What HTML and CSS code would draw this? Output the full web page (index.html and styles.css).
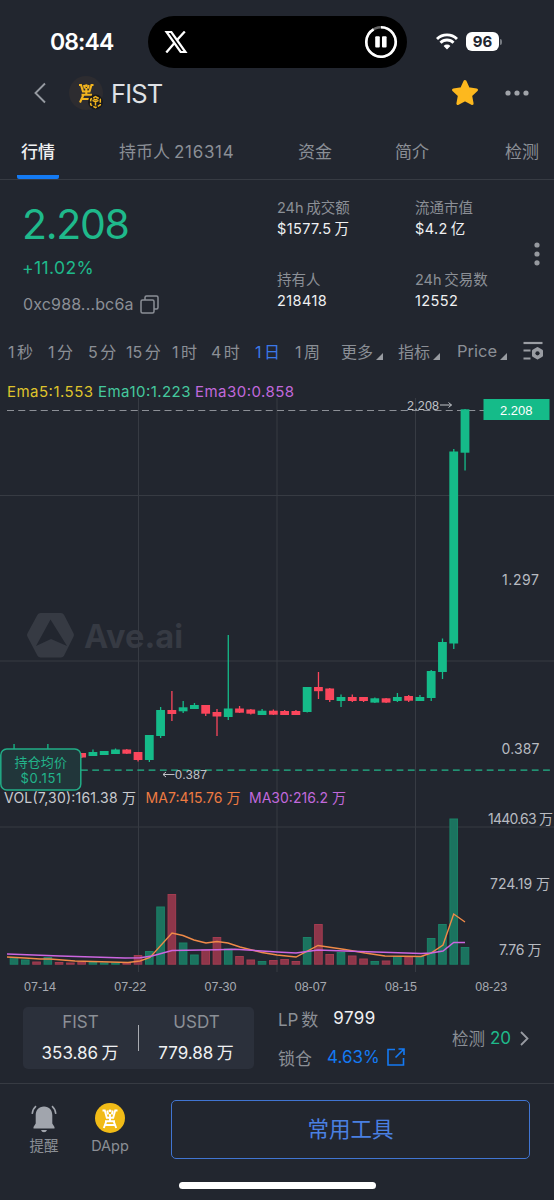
FILE: index.html
```html
<!DOCTYPE html>
<html lang="zh-CN">
<head>
  <meta charset="UTF-8" />
  <meta name="viewport" content="width=device-width, initial-scale=1.0"/>
  <title>FIST - Ave.ai</title>
  <link rel="stylesheet" href="styles.css">
</head>
<body>
  <div class="status-bar">
    <span class="clock">08:44</span>
    <div class="island">
      <svg width="24" height="22" viewBox="0 0 24 22">
        <path d="M2.500 1h4.800l14.200 20h-4.800z" fill="none" stroke="#fff" stroke-width="2.200"/>
        <path d="M20.800 .5l-8 8.800M10.200 12.300L2.300 21.500" stroke="#fff" stroke-width="2.300"/>
      </svg>
      <svg width="34" height="34" viewBox="0 0 34 34">
        <circle cx="17" cy="17" r="14.700" fill="none" stroke="#666" stroke-width="2.600"/>
        <path d="M17 2.300A14.700 14.700 0 1 1 9.600 4.300" fill="none" stroke="#fff" stroke-width="2.600"/>
        <rect x="11.200" y="11.200" width="4.600" height="11.200" rx="1" fill="#fff"/>
        <rect x="18" y="11.200" width="4.600" height="11.200" rx="1" fill="#fff"/>
      </svg>
    </div>
    <svg class="wifi" width="22" height="17" viewBox="0 0 22 17" fill="none" stroke="#fff" stroke-width="2.900">
      <path d="M1 6a14.300 14.300 0 0 1 20 0"/>
      <path d="M4.500 9.700a9.200 9.200 0 0 1 13 0"/>
      <path d="M7.600 13L11 16.600 14.400 13a4.800 4.800 0 0 0-6.800 0z" fill="#fff" stroke="none"/>
    </svg>
    <span class="battery">96</span>
    <span class="battery-cap"></span>
  </div>

  <header class="title-bar">
    <svg class="back" width="12" height="22" viewBox="0 0 12 22"><path d="M11 1.500L1.500 11 11 20.500" fill="none" stroke="#969aa1" stroke-width="1.900"/></svg>
    <svg class="coin" width="36" height="36" viewBox="0 0 36 36">
      <circle cx="17" cy="17" r="17" fill="#2d2c30"/>
      <g fill="none" stroke="#f3b51e" stroke-width="2.100">
        <path d="M10 9h2l2 6.500h6.500L22.500 9h2M15 9l.8 3.500M19.700 9l-.8 3.500M17.300 12v6M12.500 18.700h10.500M14.500 18.700L11 26.500M12.800 23h7"/>
      </g>
      <circle cx="17.300" cy="9.700" r="1.400" fill="#f3b51e"/>
      <circle cx="26.500" cy="26" r="7.500" fill="#17181c"/>
      <path d="M26.500 20.500l4.800 2.800v5.500l-4.800 2.800-4.800-2.800v-5.500z" fill="none" stroke="#f3b51e" stroke-width="1.500" stroke-dasharray="3.800 1.300"/>
      <path d="M23.500 24.300l3 1.700 3-1.700M26.500 26v3.500M24.500 22.800l2 1 2-1" fill="none" stroke="#f3b51e" stroke-width="1.500"/>
    </svg>
    <h1>FIST</h1>
    <svg class="star" width="28" height="28" viewBox="0 0 28 28"><path d="M14 2.500l3.400 7.300 8.100 1.100-5.900 5.500 1.500 8.100-7.100-3.900-7.100 3.900 1.500-8.100-5.900-5.500 8.100-1.100z" fill="#fdb81e" stroke="#fdb81e" stroke-width="3" stroke-linejoin="round"/></svg>
    <svg width="24" height="6" viewBox="0 0 24 6" fill="#a0a3a9"><circle cx="3" cy="3" r="2.600"/><circle cx="12" cy="3" r="2.600"/><circle cx="21" cy="3" r="2.600"/></svg>
  </header>

  <nav class="tabs">
    <a class="active">行情</a>
    <a class="holders">持币人<span>216314</span></a>
    <a>资金</a>
    <a>简介</a>
    <a>检测</a>
  </nav>

  <section class="quote">
    <div class="price-box">
      <div class="price">2.208</div>
      <div class="change">+11.02%</div>
      <div class="address">
        <span>0xc988...bc6a</span>
        <svg width="19" height="19" viewBox="0 0 19 19" fill="none" stroke="#8b8f96" stroke-width="1.500"><rect x="1" y="5" width="13" height="13" rx="1.500"/><path d="M5 5V2.500Q5 1 6.500 1h10Q18 1 18 2.500v10q0 1.500-1.500 1.500H14"/></svg>
      </div>
    </div>
    <dl class="stats">
      <div><dt>24h 成交额</dt><dd>$1577.5 万</dd></div>
      <div><dt>流通市值</dt><dd>$4.2 亿</dd></div>
      <div><dt>持有人</dt><dd>218418</dd></div>
      <div><dt>24h 交易数</dt><dd>12552</dd></div>
    </dl>
    <svg class="more" width="6" height="24" viewBox="0 0 6 24" fill="#96999f"><circle cx="3" cy="3" r="2.600"/><circle cx="3" cy="12" r="2.600"/><circle cx="3" cy="20.800" r="2.600"/></svg>
  </section>

  <div class="periods">
    <span>1 秒</span>
    <span>1 分</span>
    <span>5 分</span>
    <span>15 分</span>
    <span>1 时</span>
    <span>4 时</span>
    <span class="on">1 日</span>
    <span>1 周</span>
    <span class="menu">更多</span>
    <span class="menu">指标</span>
    <span class="menu latin">Price</span>
    <svg width="21" height="20" viewBox="0 0 21 20" fill="none" stroke="#9a9da3">
      <path d="M.5 2h19" stroke-width="2.200"/><path d="M.5 9.500h7M.5 17.500h7" stroke-width="1.900"/>
      <path d="M14.500 7.300l4.300 2.500v5l-4.300 2.500-4.300-2.500v-5z" fill="#9a9da3" stroke-width="2.400" stroke-linejoin="round"/>
      <circle cx="14.500" cy="12.300" r="2.100" fill="#22262f" stroke="none"/>
    </svg>
  </div>

  <svg class="chart" id="chart" width="554" height="630" viewBox="0 370 554 630">
    <g stroke="#373b43" stroke-width="1">
      <path d="M138.500 398V972M277 398V972M415.500 398V972"/>
      <path d="M0 495.500H554M0 661H554M0 827H554"/>
    </g>
    <g class="watermark">
      <path fill-rule="evenodd" d="M40.500 613h20.500q2 0 3 1.700l9.500 18.600q1 1.700 0 3.400l-9.500 19q-1 1.800-3 1.800H40.500q-2 0-3-1.800l-10-19q-1-1.700 0-3.400l10-18.600q1-1.700 3-1.700zM50.500 619.500L36 646 51 639 67 646z"/>
      <text x="84" y="648" textLength="99" lengthAdjust="spacingAndGlyphs">Ave.ai</text>
    </g>
    <g class="ema">
      <text x="7" y="397" fill="#dfc32c" textLength="86">Ema5:1.553</text>
      <text x="98" y="397" fill="#45c99e" textLength="92.500">Ema10:1.223</text>
      <text x="195" y="397" fill="#c169dc" textLength="99">Ema30:0.858</text>
    </g>
    <path d="M7 410.500H484" stroke="#8d9097" stroke-width="1.200" stroke-dasharray="7 4.250"/>
    <g id="candles"></g>
    <path d="M81 770.200H551" stroke="#22b78b" stroke-width="1.300" stroke-dasharray="6.800 4.470"/>
    <text class="mark" x="407" y="409.500" textLength="32">2.208</text>
    <path class="arrow" d="M440 405H451.500M448.500 402.500L451.500 405 448.500 407.500"/>
    <path class="arrow" d="M174.500 774.500H163M166 772L163 774.500 166 777"/>
    <text class="mark" x="175" y="779" textLength="32">0.387</text>
    <rect x="483.500" y="399" width="66" height="21" fill="#15bb89"/>
    <text class="tag" x="500" y="415" textLength="32.500">2.208</text>
    <g class="axis">
      <text x="502" y="584.500" textLength="37">1.297</text>
      <text x="501.500" y="753.500" textLength="38">0.387</text>
      <text x="488" y="824" textLength="65">1440.63 万</text>
      <text x="490" y="889" textLength="60">724.19 万</text>
      <text x="499" y="955" textLength="42.500">7.76 万</text>
    </g>
    <rect x=".8" y="749" width="80" height="41" rx="6" fill="#21363a" stroke="#22ad87" stroke-width="1.500"/>
    <g class="cost">
      <text x="14.500" y="767" textLength="52.500">持仓均价</text>
      <text x="20.500" y="782.500" textLength="41">$0.151</text>
    </g>
    <g class="vol">
      <text x="4" y="803" fill="#c9cbd0" textLength="132">VOL(7,30):161.38 万</text>
      <text x="145.500" y="803" fill="#ee7b42" textLength="95">MA7:415.76 万</text>
      <text x="249" y="803" fill="#c169dc" textLength="97">MA30:216.2 万</text>
    </g>
    <g id="volume"></g>
    <polyline fill="none" stroke="#f08a48" stroke-width="1.400" points="7,957 25,958 40,959 50,959 75,961 128,962.5 140,961 150,957.5 172,933 183,935.5 194,940 206,943 217,941.500 228,943 240,947 262,952.5 277,955 296,957 318,945.5 345,949.5 365,953 385,956 421,956.5 431,953 443,945 453.7,914 465,922"/>
    <polyline fill="none" stroke="#cc66e0" stroke-width="1.500" points="7,954 60,956 125,958 140,957.8 152,956 172,950.5 217,949.8 235,949.2 277,952 296,953 318,950 345,951 421,953.5 431,953 443,951 453.7,942.5 465,942.5"/>
    <g class="dates">
      <text x="40" y="991">07-14</text>
      <text x="130.300" y="991">07-22</text>
      <text x="220.500" y="991">07-30</text>
      <text x="310.700" y="991">08-07</text>
      <text x="401" y="991">08-15</text>
      <text x="491.200" y="991">08-23</text>
    </g>
  </svg>

  <section class="pool">
    <div class="pair">
      <div><span class="sym">FIST</span><span class="amt">353.86 万</span></div>
      <i></i>
      <div><span class="sym">USDT</span><span class="amt">779.88 万</span></div>
    </div>
    <div class="lp">
      <div><span class="label">LP 数</span><span class="count">9799</span></div>
      <div>
        <span class="label">锁仓</span><span class="lock">4.63%</span>
        <svg width="18" height="18" viewBox="0 0 18 18" fill="none" stroke="#147af3" stroke-width="1.600"><path d="M8 1.500H1V17h15.500v-7M11.500 1H17v6M17 1L8.500 9.500"/></svg>
      </div>
    </div>
    <div class="check">
      <span>检测</span><b>20</b>
      <svg width="9" height="15" viewBox="0 0 9 15"><path d="M1 1l6.500 6.500L1 14" fill="none" stroke="#989ba2" stroke-width="1.800"/></svg>
    </div>
  </section>

  <footer class="bottom-bar">
    <div class="tool">
      <svg width="26" height="30" viewBox="0 0 26 30">
        <path d="M13 3.500c5.300 0 8.300 3.700 8.300 8.700v8.300l2.200 3.500v1.500h-21V24l2.200-3.500v-8.300c0-5 3-8.700 8.300-8.700zM10 27h6q-.7 2.300-3 2.300T10 27z" fill="#a1a5ad"/>
        <path d="M5 3.200Q1.700 6 1.200 10.800M21 3.200q3.300 2.800 3.800 7.600" fill="none" stroke="#a1a5ad" stroke-width="1.600"/>
      </svg>
      <span>提醒</span>
    </div>
    <div class="tool dapp">
      <svg width="30" height="30" viewBox="0 0 30 30">
        <circle cx="15" cy="15" r="15" fill="#f1bb17"/>
        <path d="M7.500 7.500h2.300l2 7.300h6.400l2-7.300h2.300M12.300 7.500l.8 4M17.700 7.500l-.8 4M15 11v7M10 18.300h10M11.300 18.300L8.800 25M18.700 18.300l2.500 6.700M10 22h10" fill="none" stroke="#fff" stroke-width="1.900"/>
        <circle cx="15" cy="7.800" r="1.400" fill="#fff"/>
      </svg>
      <span>DApp</span>
    </div>
    <button>常用工具</button>
  </footer>
  <div class="home-bar"></div>
  <script src="chart.js"></script>
</body>
</html>
```
FILE: styles.css
```css
* {
  box-sizing: border-box;
}
body {
  margin: 0;
  width: 554px;
  height: 1200px;
  overflow: hidden;
  display: flex;
  flex-direction: column;
  background: #22262f;
  color: #8b8f96;
  font-family: Inter, "Noto Sans CJK SC", sans-serif;
  font-size: 15px;
}
svg {
  flex: none;
  display: block;
}
span, a, dt, dd {
  white-space: nowrap;
}
.status-bar {
  height: 70px;
  display: flex;
  align-items: center;
  padding: 13px 0 0 50px;
}
.clock {
  width: 98px;
  color: #fff;
  font-size: 23px;
  font-weight: 600;
  letter-spacing: -0.9px;
}
.island {
  width: 259px;
  height: 52px;
  border-radius: 26px;
  background: #000;
  display: flex;
  align-items: center;
  justify-content: space-between;
  padding: 0 9px 0 16px;
}
.wifi {
  margin-left: 29px;
}
.battery {
  margin-left: 8px;
  width: 33px;
  height: 19px;
  border-radius: 6px;
  background: #fff;
  color: #22262f;
  font-size: 15px;
  font-weight: 700;
  line-height: 19px;
  text-align: center;
}
.battery-cap {
  width: 2px;
  height: 6px;
  margin-left: 1px;
  border-radius: 0 2px 2px 0;
  background: #777b82;
}
.title-bar {
  height: 46px;
  display: flex;
  align-items: center;
  padding: 0 25px 0 34px;
}
.coin {
  margin: 2px 0 0 23px;
}
h1 {
  flex: 1;
  margin: 1px 0 0 6px;
  color: #dfe1e5;
  font-size: 25.5px;
  font-weight: 400;
  letter-spacing: -0.8px;
}
.star {
  margin-right: 26px;
}
.tabs {
  height: 64px;
  display: grid;
  grid-template-columns: 98px 179px 97px 110px 1fr;
  padding-left: 21px;
  border-bottom: 1px solid #373b43;
  font-size: 17px;
  line-height: 73px;
}
.tabs a {
  height: 63px;
}
/* short underline sitting on the tab bar border */
.tabs .active {
  color: #f0f1f3;
  font-weight: 500;
  width: 42px;
  margin-left: -4px;
  padding-left: 4px;
  background: linear-gradient(#147af3, #147af3) bottom / 100% 4px no-repeat;
  border-radius: 0 0 2px 2px;
}
.holders span {
  margin-left: 4px;
  letter-spacing: 0.7px;
}
.quote {
  height: 153px;
  display: flex;
  padding-left: 22px;
}
.price-box {
  width: 255px;
  padding-top: 19px;
}
.price {
  color: #1fb98b;
  font-size: 41px;
  line-height: 50px;
  height: 50px;
  letter-spacing: -1.3px;
}
.change {
  color: #1fb98b;
  font-size: 17.5px;
  line-height: 38px;
  letter-spacing: 0.4px;
}
.address {
  display: flex;
  align-items: center;
  gap: 6px;
  font-size: 16px;
  height: 34px;
  letter-spacing: 0.15px;
  padding-left: 1px;
}
.stats {
  width: 250px;
  margin: 0;
  padding-top: 17px;
  display: grid;
  grid-template-columns: 138px 1fr;
  grid-template-rows: 72px 72px;
  font-size: 14.5px;
  word-spacing: -1.5px;
}
.stats dt, .stats dd {
  margin: 0;
  line-height: 21px;
}
.stats dd {
  color: #eff0f2;
  letter-spacing: 0.4px;
}
.more {
  margin: 62px 0 0 7px;
}
.periods {
  height: 36px;
  margin-bottom: 1px;
  display: grid;
  grid-template-columns: 40px 40px 38px 46px 39px 44px 40px 46px 57px 59px 66px 1fr;
  align-items: center;
  padding-left: 8px;
  font-size: 16px;
  word-spacing: -2px;
}
.periods .on {
  color: #3b78e8;
}
.menu {
  display: flex;
  align-items: center;
}
.menu::after {
  content: "";
  border-left: 7px solid transparent;
  border-bottom: 7px solid #989ba1;
  margin: 11px 0 0 3px;
}
.latin {
  font-size: 16.5px;
}
.chart {
  font-family: Inter, "Noto Sans CJK SC", sans-serif;
}
.ema {
  font-size: 15px;
}
.vol, .axis {
  font-size: 14px;
}
.axis {
  fill: #b8bbc1;
}
.cost {
  font-size: 13px;
  fill: #22b48b;
}
.watermark {
  fill: #363a43;
  font-size: 33px;
  font-weight: 700;
}
.mark, .tag, .dates {
  font-family: "Liberation Sans", sans-serif;
  font-size: 12.5px;
  fill: #c0c3c8;
}
.tag {
  fill: #fff;
  font-size: 13px;
}
.dates {
  fill: #a7aab1;
  text-anchor: middle;
}
.arrow {
  fill: none;
  stroke: #c0c3c8;
  stroke-width: 1;
}
.up {
  fill: #15bb89;
}
.down {
  fill: #fb465c;
}
.vol-up {
  fill: #1b735f;
  stroke: #1b8167;
}
.vol-down {
  fill: #8e364a;
  stroke: #a23c50;
}
.pool {
  height: 84px;
  border-bottom: 1px solid #373b43;
  display: flex;
  padding: 7px 0 0 23px;
}
.pair {
  width: 231px;
  height: 62px;
  border-radius: 5px;
  background: #2b303b;
  display: flex;
  align-items: center;
}
.pair div {
  flex: 1;
  display: flex;
  flex-direction: column;
  align-items: center;
  line-height: 31px;
}
.pair i {
  width: 1px;
  height: 26px;
  background: #a8abb1;
}
.sym {
  font-size: 17px;
}
.amt {
  color: #eff0f2;
  font-size: 17px;
  word-spacing: -1.5px;
  margin-right: 1px;
}
.lp {
  width: 175px;
  padding: 0 0 0 24px;
}
.lp div {
  display: flex;
  align-items: center;
  height: 40px;
  margin-top: -9px;
  font-size: 17px;
  word-spacing: -2px;
}
.lp div + div {
  margin-top: -1px;
}
.count {
  color: #eff0f2;
  margin-left: 15px;
  letter-spacing: 0.4px;
}
.lock {
  color: #147af3;
  margin: 0 7px 0 15px;
}
.check {
  display: flex;
  align-items: center;
  height: 62px;
  margin-left: 23px;
  font-size: 16.5px;
}
.check b {
  color: #1fb98b;
  font-weight: 400;
  font-size: 17px;
  margin: 0 9px 0 5px;
}
.bottom-bar {
  height: 98px;
  display: flex;
  padding: 16px 0 0 20px;
}
.tool {
  width: 48px;
  display: flex;
  flex-direction: column;
  align-items: center;
  padding-top: 3px;
  font-size: 14.5px;
  line-height: 25px;
}
.dapp {
  margin: 0 42px 0 18px;
  padding-top: 3px;
}
button {
  width: 359px;
  height: 59px;
  margin-left: -5px;
  padding: 0 0 4px;
  border: 1.5px solid #4175d2;
  border-radius: 5px;
  background: none;
  color: #4a80e2;
  font-family: inherit;
  font-size: 21.5px;
}
.home-bar {
  width: 197px;
  height: 7px;
  margin-left: 179px;
  border-radius: 4px;
  background: #fff;
}
```
FILE: chart.js
```js
// [up, body top, body bottom, wick top, wick bottom, volume top]
const days = [
  [1, 752, 757, 744, 758, 957],
  [1, 753, 757, 752, 758, 959.5],
  [0, 753, 757, 752, 758, 961.5],
  [1, 752, 757, 744, 758, 957],
  [0, 752, 757, 751, 758, 962],
  [0, 753, 757, 752, 758, 962.5],
  [0, 753, 757.5, 753, 758, 961.5],
  [1, 752, 756, 749.5, 756, 962],
  [1, 751, 755, 751, 755, 962.5],
  [1, 749.5, 754, 748.5, 754, 962.5],
  [0, 749.5, 753.7, 749, 754, 962.5],
  [0, 752, 760, 752, 761.5, 955],
  [1, 735, 760, 735, 762, 951],
  [1, 710, 736, 707, 738, 906.5],
  [0, 710, 714, 691, 721, 894],
  [1, 707.3, 711.3, 701, 713, 942.5],
  [1, 705, 709, 703, 709, 954.5],
  [0, 705, 713.7, 705, 716, 949.5],
  [0, 712, 716.5, 709, 736, 937],
  [1, 708.5, 717, 635, 720, 948.5],
  [0, 708.5, 712.7, 706, 713, 956],
  [0, 709.5, 713.7, 709, 714.5, 959.5],
  [1, 710.7, 715, 709, 715, 961],
  [0, 710.7, 714.7, 709.5, 715, 960],
  [0, 711, 715, 710, 715, 959],
  [0, 711, 715, 710, 715, 961],
  [1, 687, 712, 687, 712.5, 937],
  [0, 687, 691.2, 672, 699, 924],
  [0, 688.5, 700, 688, 702, 954],
  [1, 697, 701, 694.5, 707, 952],
  [0, 697, 701, 694.5, 702, 955.5],
  [0, 697, 701, 697, 702, 958.5],
  [1, 698.3, 702.6, 697.5, 703, 961],
  [0, 698.3, 702.6, 698, 703, 960.5],
  [1, 697, 701, 693, 702, 956],
  [0, 696, 700.7, 695, 702, 956.5],
  [1, 697, 701, 695, 701, 956],
  [1, 671, 698, 670, 701, 938],
  [1, 642, 672, 638.5, 679, 924],
  [1, 451.5, 643.5, 449, 649, 818.5],
  [1, 409.3, 452.7, 409, 470.5, 947]
];

const base = 964.5;
let candles = '';
let volume = '';

days.forEach(([up, top, bottom, high, low, vol], i) => {
  const x = 14 + i * 11.275;
  const cls = up ? 'up' : 'down';
  candles += `<g class="${cls}">
    <rect x="${x - 0.6}" y="${high}" width="1.3" height="${low - high}"/>
    <rect x="${x - 4.4}" y="${top}" width="8.8" height="${bottom - top}"/>
  </g>`;
  volume += `<rect class="vol-${cls}" x="${x - 3.8}" y="${vol + 0.5}" width="7.6" height="${base - vol - 0.8}"/>`;
});

document.getElementById('candles').innerHTML = candles;
document.getElementById('volume').innerHTML = volume;
```
